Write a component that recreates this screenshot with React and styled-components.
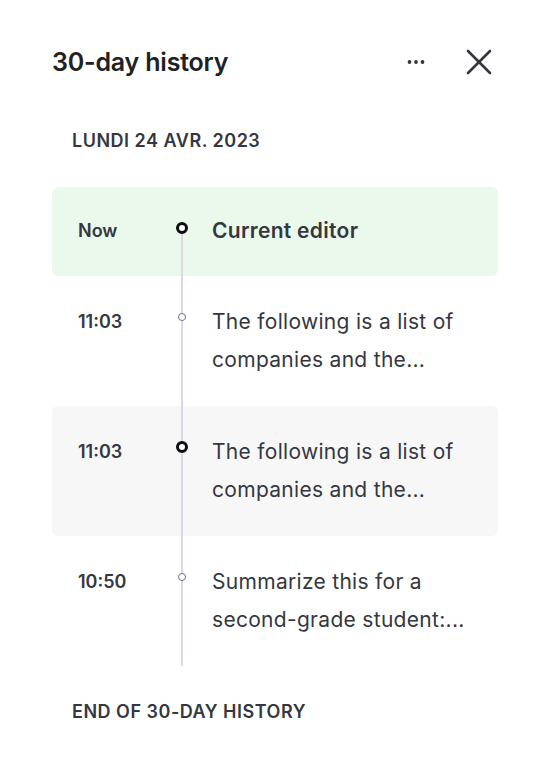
import React from "react";
import styled, { createGlobalStyle } from "styled-components";

const GlobalStyle = createGlobalStyle`
  html, body {
    margin: 0;
    padding: 0;
    background: #ffffff;
  }
  body {
    font-family: Inter, "Noto Sans", "Liberation Sans", sans-serif;
    color: #353740;
  }
`;

const Panel = styled.div`
  width: 550px;
  box-sizing: border-box;
  padding: 42px 52px 40px 52px;
`;

const Header = styled.div`
  display: flex;
  align-items: center;
  justify-content: space-between;
  height: 40px;
`;

const Title = styled.h2`
  margin: 0;
  font-size: 25px;
  font-weight: 600;
  letter-spacing: -0.2px;
  color: #202123;
`;

const Actions = styled.div`
  display: flex;
  align-items: center;
  gap: 41px;
  margin-right: 6px;
`;

const IconButton = styled.button`
  display: flex;
  align-items: center;
  justify-content: center;
  padding: 0;
  border: none;
  background: none;
  color: #353740;
  cursor: pointer;
`;

const SectionLabel = styled.div`
  font-size: 18px;
  font-weight: 600;
  line-height: 22px;
  text-transform: uppercase;
  letter-spacing: 0.5px;
  color: #353740;
  padding: 0 20px;
  margin: ${(p) => p.$margin};
`;

const Timeline = styled.div`
  display: flex;
  flex-direction: column;
`;

const Row = styled.div`
  display: grid;
  grid-template-columns: 89px 30px 1fr;
  padding: 0 26px;
  border-radius: 6px;
  background: ${(p) => p.$bg || "transparent"};
`;

const Time = styled.div`
  padding: ${(p) => (p.$single ? "25px 0 26px" : "27px 0")};
  font-size: 18px;
  font-weight: 600;
  line-height: 38px;
  color: #353740;
`;

const Rail = styled.div`
  position: relative;
  &::before {
    content: "";
    position: absolute;
    left: 50%;
    width: 2px;
    margin-left: -1px;
    top: ${(p) => (p.$first ? "41px" : "0")};
    bottom: 0;
    background: #d9d9e3;
  }
`;

const Dot = styled.span`
  position: absolute;
  left: 50%;
  top: 41px;
  width: ${(p) => (p.$strong ? "12px" : "8px")};
  height: ${(p) => (p.$strong ? "12px" : "8px")};
  transform: translate(-50%, -50%);
  box-sizing: border-box;
  border-radius: 50%;
  background: #ffffff;
  border: ${(p) => (p.$strong ? "3px solid #0d0d0f" : "1.5px solid #6e6e80")};
`;

const Text = styled.div`
  margin-left: 15px;
  padding: ${(p) => (p.$single ? "25px 0 26px" : "27px 0")};
  font-size: 21px;
  line-height: 38px;
  letter-spacing: 0.3px;
  font-weight: ${(p) => (p.$bold ? 600 : 400)};
  color: #353740;
`;

const entries = [
  { time: "Now", lines: ["Current editor"], bold: true, strong: true, bg: "#ebf9ec" },
  { time: "11:03", lines: ["The following is a list of", "companies and the..."] },
  { time: "11:03", lines: ["The following is a list of", "companies and the..."], strong: true, bg: "#f7f7f8" },
  { time: "10:50", lines: ["Summarize this for a", "second-grade student:..."] },
];

const DotsIcon = () => (
  <svg width="18" height="6" viewBox="0 0 18 6" fill="#353740">
    <circle cx="2.5" cy="3" r="1.9" />
    <circle cx="9" cy="3" r="1.9" />
    <circle cx="15.5" cy="3" r="1.9" />
  </svg>
);

const CloseIcon = () => (
  <svg width="26" height="26" viewBox="0 0 26 26" fill="none" stroke="#353740" strokeWidth="2.6" strokeLinecap="round">
    <line x1="2" y1="2" x2="24" y2="24" />
    <line x1="24" y1="2" x2="2" y2="24" />
  </svg>
);

export default function App() {
  return (
    <>
      <GlobalStyle />
      <Panel>
        <Header>
          <Title>30-day history</Title>
          <Actions>
            <IconButton aria-label="More">
              <DotsIcon />
            </IconButton>
            <IconButton aria-label="Close">
              <CloseIcon />
            </IconButton>
          </Actions>
        </Header>
        <SectionLabel $margin="48px 0 35px">Lundi 24 avr. 2023</SectionLabel>
        <Timeline>
          {entries.map((e, i) => {
            const single = e.lines.length === 1;
            return (
              <Row key={i} $bg={e.bg}>
                <Time $single={single}>{e.time}</Time>
                <Rail $first={i === 0}>
                  <Dot $strong={e.strong} />
                </Rail>
                <Text $bold={e.bold} $single={single}>
                  {e.lines.map((l, j) => (
                    <div key={j}>{l}</div>
                  ))}
                </Text>
              </Row>
            );
          })}
        </Timeline>
        <SectionLabel $margin="35px 0 0">End of 30-day history</SectionLabel>
      </Panel>
    </>
  );
}
